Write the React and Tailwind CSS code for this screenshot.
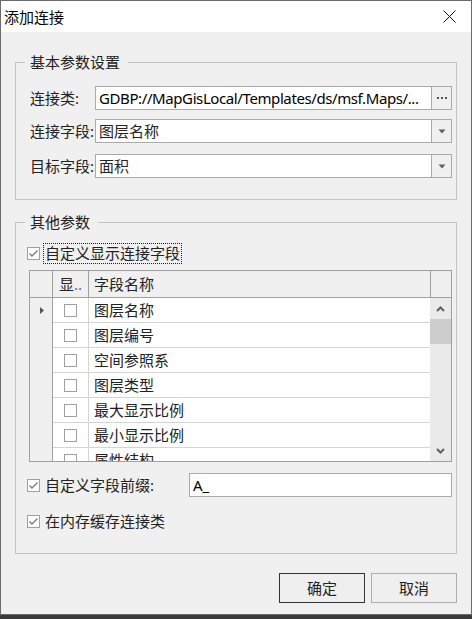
import React from "react";

const FONT = { fontFamily: '"Noto Sans", "Noto Sans CJK SC", sans-serif' };

function Check({ checked }) {
  return (
    <span className="w-[13px] h-[13px] shrink-0 border border-[#a0a0a0] bg-white flex items-center justify-center">
      {checked && (
        <svg width="11" height="11" viewBox="0 0 11 11">
          <path d="M1.5 5.5 L4 8 L9.5 2.5" fill="none" stroke="#7a7a7a" strokeWidth="1.4" />
        </svg>
      )}
    </span>
  );
}

function DropArrow() {
  return (
    <svg width="8" height="5" viewBox="0 0 8 5">
      <path d="M0.5 0.5 H7.5 L4 4.5 Z" fill="#606060" />
    </svg>
  );
}

const rows = ["图层名称", "图层编号", "空间参照系", "图层类型", "最大显示比例", "最小显示比例", "属性结构"];

export default function App() {
  return (
    <div className="w-[472px] h-[619px] bg-[#3a3a3a] text-[15px] text-[#222]" style={FONT}>
      <div className="w-[472px] h-[615px] border border-[#6b6b6b] bg-[#f0f0f0] flex flex-col">
        {/* Title bar */}
        <div className="h-[31px] bg-white flex items-center justify-between pl-[3px] pr-[15px]">
          <span className="text-[15px] leading-[20px] text-black">添加连接</span>
          <svg width="13" height="13" viewBox="0 0 13 13">
            <path d="M0.5 0.5 L12.5 12.5 M12.5 0.5 L0.5 12.5" stroke="#111" strokeWidth="1" />
          </svg>
        </div>

        <div className="flex flex-col px-[14px]">
          {/* Group 1 */}
          <fieldset className="mt-[20px] border border-[#c4c4c4] pl-[14px] pr-[4px] pb-[21px]">
            <legend className="-ml-[5px] px-[5px] pr-[8px] leading-[20px]">基本参数设置</legend>
            <div className="mt-[14px] flex items-center h-[24px]">
              <span className="w-[65px] shrink-0">连接类:</span>
              <div className="flex-1 h-[24px] flex border border-[#aaaaaa] bg-white">
                <span className="flex-1 pl-[3px] leading-[22px] text-black whitespace-nowrap overflow-hidden tracking-[-0.4px]">
                  GDBP://MapGisLocal/Templates/ds/msf.Maps/...
                </span>
                <span className="w-[20px] border-l border-[#aaaaaa] bg-[#f0f0f0] flex items-center justify-center">
                  <svg width="10" height="3" viewBox="0 0 10 3">
                    <rect x="0" y="0" width="2" height="2" fill="#555" />
                    <rect x="4" y="0" width="2" height="2" fill="#555" />
                    <rect x="8" y="0" width="2" height="2" fill="#555" />
                  </svg>
                </span>
              </div>
            </div>
            <div className="mt-[9px] flex items-center h-[24px]">
              <span className="w-[65px] shrink-0">连接字段:</span>
              <div className="flex-1 h-[24px] flex border border-[#aaaaaa] bg-white">
                <span className="flex-1 pl-[3px] leading-[22px]">图层名称</span>
                <span className="w-[20px] border-l border-[#aaaaaa] bg-[#f0f0f0] flex items-center justify-center">
                  <DropArrow />
                </span>
              </div>
            </div>
            <div className="mt-[11px] flex items-center h-[24px]">
              <span className="w-[65px] shrink-0">目标字段:</span>
              <div className="flex-1 h-[24px] flex border border-[#aaaaaa] bg-white">
                <span className="flex-1 pl-[3px] leading-[22px]">面积</span>
                <span className="w-[20px] border-l border-[#aaaaaa] bg-[#f0f0f0] flex items-center justify-center">
                  <DropArrow />
                </span>
              </div>
            </div>
          </fieldset>

          {/* Group 2 */}
          <fieldset className="mt-[12px] border border-[#c4c4c4] pl-[11px] pr-[4px] pb-[21px]">
            <legend className="-ml-[2px] px-[5px] pr-[8px] leading-[20px]">其他参数</legend>
            <div className="mt-[11px] h-[21px] flex items-center">
              <Check checked />
              <span className="ml-[3px] px-[1px] h-[21px] leading-[19px] border border-dotted border-[#222]">自定义显示连接字段</span>
            </div>

            {/* Table */}
            <div className="mt-[6px] ml-[2px] h-[192px] border border-[#a0a0a0] flex flex-col bg-white">
              <div className="h-[27px] shrink-0 flex border-b border-[#a0a0a0] bg-[#f0f0f0]">
                <div className="w-[23px] shrink-0 border-r border-[#a0a0a0]" />
                <div className="w-[36px] shrink-0 border-r border-[#a0a0a0] pl-[6px] leading-[26px] whitespace-nowrap">
                  显<span className="text-[#4a6fa8]">..</span>
                </div>
                <div className="flex-1 pl-[5px] leading-[26px]">字段名称</div>
                <div className="w-[21px] shrink-0 border-l border-[#a0a0a0]" />
              </div>
              <div className="flex-1 flex overflow-hidden">
                <div className="w-[23px] shrink-0 border-r border-[#a0a0a0] bg-[#f0f0f0] flex flex-col">
                  <div className="h-[25px] flex items-center pl-[10px]">
                    <svg width="4" height="7" viewBox="0 0 4 7">
                      <path d="M0 0 L4 3.5 L0 7 Z" fill="#555" />
                    </svg>
                  </div>
                </div>
                <div className="flex-1 flex flex-col">
                  {rows.map((r) => (
                    <div key={r} className="h-[25px] shrink-0 flex border-b border-[#d4d4d4]">
                      <div className="w-[36px] shrink-0 border-r border-[#d4d4d4] flex items-center justify-center">
                        <Check />
                      </div>
                      <div className="flex-1 pl-[5px] leading-[24px] whitespace-nowrap">{r}</div>
                    </div>
                  ))}
                </div>
                <div className="w-[21px] shrink-0 bg-[#eaeaea] flex flex-col">
                  <div className="h-[21px] flex items-center justify-center">
                    <svg width="9" height="6" viewBox="0 0 9 6">
                      <path d="M1 5 L4.5 1.5 L8 5" fill="none" stroke="#606060" strokeWidth="2" />
                    </svg>
                  </div>
                  <div className="h-[25px] bg-[#cdcdcd]" />
                  <div className="flex-1" />
                  <div className="h-[21px] flex items-center justify-center">
                    <svg width="9" height="6" viewBox="0 0 9 6">
                      <path d="M1 1 L4.5 4.5 L8 1" fill="none" stroke="#606060" strokeWidth="2" />
                    </svg>
                  </div>
                </div>
              </div>
            </div>

            <div className="mt-[11px] h-[24px] flex items-center">
              <Check checked />
              <span className="ml-[5px] w-[144px]">自定义字段前缀:</span>
              <div className="flex-1 h-[24px] border border-[#aaaaaa] bg-white pl-[3px] leading-[22px] text-black">A_</div>
            </div>
            <div className="mt-[14px] h-[21px] flex items-center">
              <Check checked />
              <span className="ml-[5px]">在内存缓存连接类</span>
            </div>
          </fieldset>

          {/* Buttons */}
          <div className="mt-[19px] flex justify-end gap-[6px]">
            <button className="w-[86px] h-[30px] border border-[#333] bg-[#efefef] text-[15px] text-[#222]">确定</button>
            <button className="w-[86px] h-[30px] border border-[#adadad] bg-[#efefef] text-[15px] text-[#222]">取消</button>
          </div>
        </div>
      </div>
    </div>
  );
}
